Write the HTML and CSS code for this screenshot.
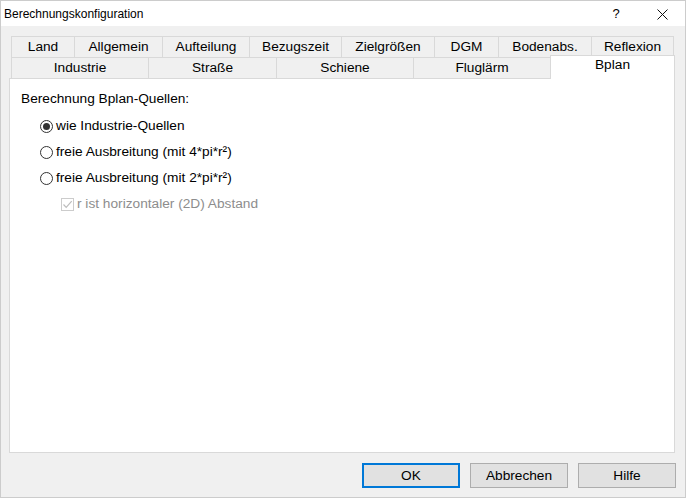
FILE: index.html
```html
<!DOCTYPE html>
<html lang="de">
<head>
<meta charset="utf-8">
<title>Berechnungskonfiguration</title>
<link rel="stylesheet" href="styles.css">
</head>
<body>
<div class="window">
  <div class="titlebar">
    <span class="title">Berechnungskonfiguration</span>
    <span class="title-help">?</span>
    <span class="title-close">
      <svg width="11" height="11" viewBox="0 0 11 11"><path d="M0.5 0.5 L10.5 10.5 M10.5 0.5 L0.5 10.5" stroke="#111" stroke-width="1" fill="none"/></svg>
    </span>
  </div>

  <div class="content">
    <div class="tabs">
      <div class="tab-row row-back">
        <div class="tab" style="width:63px">Land</div>
        <div class="tab" style="width:88px">Allgemein</div>
        <div class="tab" style="width:87px">Aufteilung</div>
        <div class="tab" style="width:92px">Bezugszeit</div>
        <div class="tab" style="width:93px">Zielgrößen</div>
        <div class="tab" style="width:64px">DGM</div>
        <div class="tab" style="width:93px">Bodenabs.</div>
        <div class="tab tab-last" style="width:83px">Reflexion</div>
      </div>
      <div class="tab-row row-front">
        <div class="tab" style="width:137px">Industrie</div>
        <div class="tab" style="width:128px">Straße</div>
        <div class="tab" style="width:137px">Schiene</div>
        <div class="tab" style="width:137px">Fluglärm</div>
        <div class="tab tab-active" style="width:125px">Bplan</div>
      </div>
    </div>

    <div class="panel">
      <div class="group-label">Berechnung Bplan-Quellen:</div>
      <div class="options">
        <label class="option">
          <span class="radio checked"></span>
          <span class="option-text">wie Industrie-Quellen</span>
        </label>
        <label class="option">
          <span class="radio"></span>
          <span class="option-text">freie Ausbreitung (mit 4*pi*r²)</span>
        </label>
        <label class="option">
          <span class="radio"></span>
          <span class="option-text">freie Ausbreitung (mit 2*pi*r²)</span>
        </label>
        <label class="option option-sub disabled">
          <span class="checkbox">
            <svg width="11" height="11" viewBox="0 0 11 11"><path d="M1.5 5.5 L4.2 8.3 L9.7 2.2" stroke="#bdbdbd" stroke-width="1.2" fill="none"/></svg>
          </span>
          <span class="option-text">r ist horizontaler (2D) Abstand</span>
        </label>
      </div>
    </div>

    <div class="buttons">
      <button class="btn btn-default">OK</button>
      <button class="btn">Abbrechen</button>
      <button class="btn">Hilfe</button>
    </div>
  </div>
</div>
</body>
</html>
```

FILE: styles.css
```css
html, body {
  margin: 0;
  padding: 0;
  background: #ffffff;
}

body {
  font-family: "Liberation Sans", Arial, sans-serif;
  font-size: 13.7px;
  color: #000;
}

.window {
  width: 686px;
  height: 498px;
  box-sizing: border-box;
  border: 1px solid #cccccc;
  background: #f0f0f0;
  display: flex;
  flex-direction: column;
}

/* title bar */
.titlebar {
  height: 25px;
  background: #ffffff;
  display: flex;
  align-items: center;
  font-size: 12px;
  color: #000;
}

.title {
  padding-left: 3px;
  flex: 1;
}

.title-help {
  font-size: 13px;
  width: 12px;
  margin-right: 35px;
  text-align: center;
}

.title-close {
  display: flex;
  width: 11px;
  height: 11px;
  margin-right: 17px;
  margin-top: 1px;
}

/* dialog body */
.content {
  flex: 1;
  display: flex;
  flex-direction: column;
  padding: 10px 0 0 8px;
}

.tabs {
  padding-left: 2px;
}

.tab-row {
  display: flex;
  height: 21px;
}

.tab {
  box-sizing: border-box;
  height: 21px;
  border-top: 1px solid #d9d9d9;
  border-left: 1px solid #d9d9d9;
  background: #f0f0f0;
  text-align: center;
  line-height: 20px;
  white-space: nowrap;
}

.tab-last {
  border-right: 1px solid #d9d9d9;
}

.tab-active {
  position: relative;
  z-index: 1;
  height: 24px;
  margin-top: -2px;
  margin-bottom: -1px;
  border-right: 1px solid #d9d9d9;
  background: #ffffff;
  line-height: 18px;
}

.panel {
  width: 666px;
  height: 375px;
  box-sizing: border-box;
  border: 1px solid #d9d9d9;
  background: #ffffff;
  padding: 10px 0 0 11px;
}

.group-label {
  line-height: 20px;
  margin-bottom: 4px;
}

.options {
  display: flex;
  flex-direction: column;
  padding-left: 19px;
}

.option {
  height: 26px;
  display: flex;
  align-items: center;
  line-height: 20px;
}

.option-text {
  margin-left: 3px;
}

.option-sub {
  padding-left: 21px;
}

.radio {
  width: 13px;
  height: 13px;
  box-sizing: border-box;
  border: 1px solid #333333;
  border-radius: 50%;
  display: flex;
  align-items: center;
  justify-content: center;
  background: #fff;
}

.radio.checked::after {
  content: "";
  width: 7px;
  height: 7px;
  border-radius: 50%;
  background: #333333;
}

.checkbox {
  width: 13px;
  height: 13px;
  box-sizing: border-box;
  border: 1px solid #cccccc;
  background: #ffffff;
  display: flex;
  align-items: center;
  justify-content: center;
}

.disabled .option-text {
  color: #8d8d8d;
}

/* bottom buttons */
.buttons {
  display: flex;
  justify-content: flex-end;
  gap: 10px;
  padding: 10px 9px 0 0;
}

.btn {
  width: 98px;
  height: 25px;
  box-sizing: border-box;
  border: 1px solid #adadad;
  background: #e1e1e1;
  font-family: "Liberation Sans", Arial, sans-serif;
  font-size: 13.7px;
  color: #000;
  padding: 0;
  margin: 0;
}

.btn-default {
  border: 2px solid #0078d7;
}
```
